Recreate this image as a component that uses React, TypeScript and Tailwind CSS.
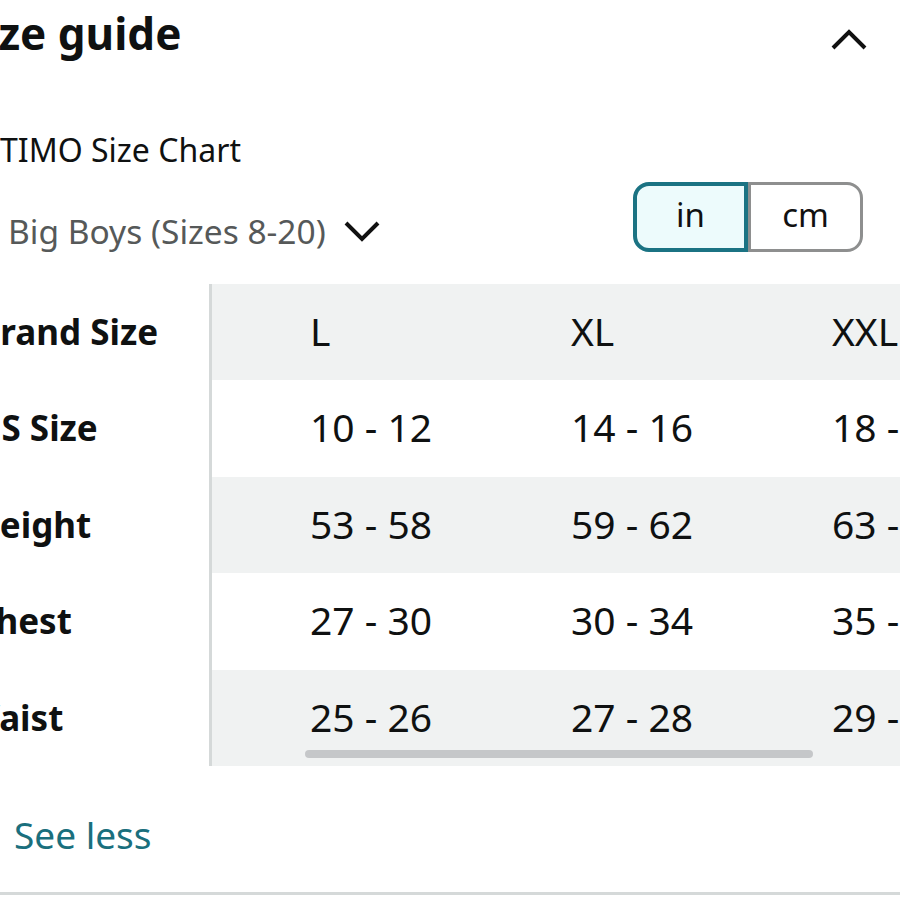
import React from "react";

const sizes = ["L", "XL", "XXL"];

const rows = [
  { label: "Brand Size", shift: "-ml-[23px]", values: ["L", "XL", "XXL"] },
  { label: "US Size", shift: "-ml-[25px]", values: ["10 - 12", "14 - 16", "18 - 20"] },
  { label: "Height", shift: "-ml-[27px]", values: ["53 - 58", "59 - 62", "63 - 66"] },
  { label: "Chest", shift: "-ml-[27px]", values: ["27 - 30", "30 - 34", "35 - 38"] },
  { label: "Waist", shift: "-ml-[34px]", values: ["25 - 26", "27 - 28", "29 - 30"] },
];

const ChevronUp = () => (
  <svg width="38" height="26" viewBox="0 0 38 26" fill="none">
    <polyline points="3,22 19,6 35,22" stroke="#111" strokeWidth="4" />
  </svg>
);

const ChevronDown = () => (
  <svg width="38" height="26" viewBox="0 0 38 26" fill="none">
    <polyline points="3,5 19,21 35,5" stroke="#111" strokeWidth="4" />
  </svg>
);

const UnitToggle = () => (
  <div className="flex h-[70px] w-[230px]">
    <button className="flex w-[115px] items-center justify-center rounded-l-[16px] border-[4px] border-[#1b7383] bg-[#edfbfc] pb-[4px] text-[33px] text-[#111]">
      in
    </button>
    <button className="flex w-[115px] items-center justify-center rounded-r-[16px] border-[3px] border-[#8e8f8f] bg-white pb-[4px] text-[33px] text-[#111]">
      cm
    </button>
  </div>
);

export default function App() {
  return (
    <div className="relative h-[902px] w-[900px] overflow-hidden bg-white font-['Noto_Sans',sans-serif] text-[#0f1111]">
      <div className="flex h-[134px] items-start justify-between pt-[11px] pr-[32px]">
        <h2 className="-ml-[39px] text-[44px] leading-none font-bold">Size guide</h2>
        <div className="mt-[15px]">
          <ChevronUp />
        </div>
      </div>

      <div className="text-[32px] leading-none">TIMO Size Chart</div>

      <div className="mt-[16px] flex items-end justify-between pr-[37px]">
        <div className="flex items-center gap-[17px] pb-[4px] pl-[8px]">
          <span className="text-[33.5px] leading-none text-[#565959]">Big Boys (Sizes 8-20)</span>
          <ChevronDown />
        </div>
        <UnitToggle />
      </div>

      <div className="relative mt-[32px] flex">
        <div className="w-[212px] shrink-0 border-r-[3px] border-[#d5d9d9] bg-white">
          {rows.map((r) => (
            <div key={r.label} className="flex h-[96.4px] items-center">
              <span className={`${r.shift} text-[35px] font-bold whitespace-nowrap`}>{r.label}</span>
            </div>
          ))}
        </div>
        <div className="flex-1 overflow-hidden">
          {rows.map((r, i) => (
            <div
              key={r.label}
              className={`flex h-[96.4px] items-center pb-[2px] ${i % 2 === 0 ? "bg-[#f0f2f2]" : "bg-white"}`}
            >
              {r.values.map((v, j) => (
                <div key={sizes[j]} className="w-[261px] shrink-0 pl-[98px] text-[39px] whitespace-nowrap">
                  {v}
                </div>
              ))}
            </div>
          ))}
        </div>
        <div className="absolute bottom-[8px] left-[305px] h-[8px] w-[508px] rounded-full bg-[#c5c7c9]" />
      </div>

      <div className="h-[126px] pt-[50px] pl-[14px]">
        <a className="text-[37px] leading-none text-[#1a6f7d]">See less</a>
      </div>
      <div className="h-[3px] w-full bg-[#d5d9d9]" />
    </div>
  );
}
